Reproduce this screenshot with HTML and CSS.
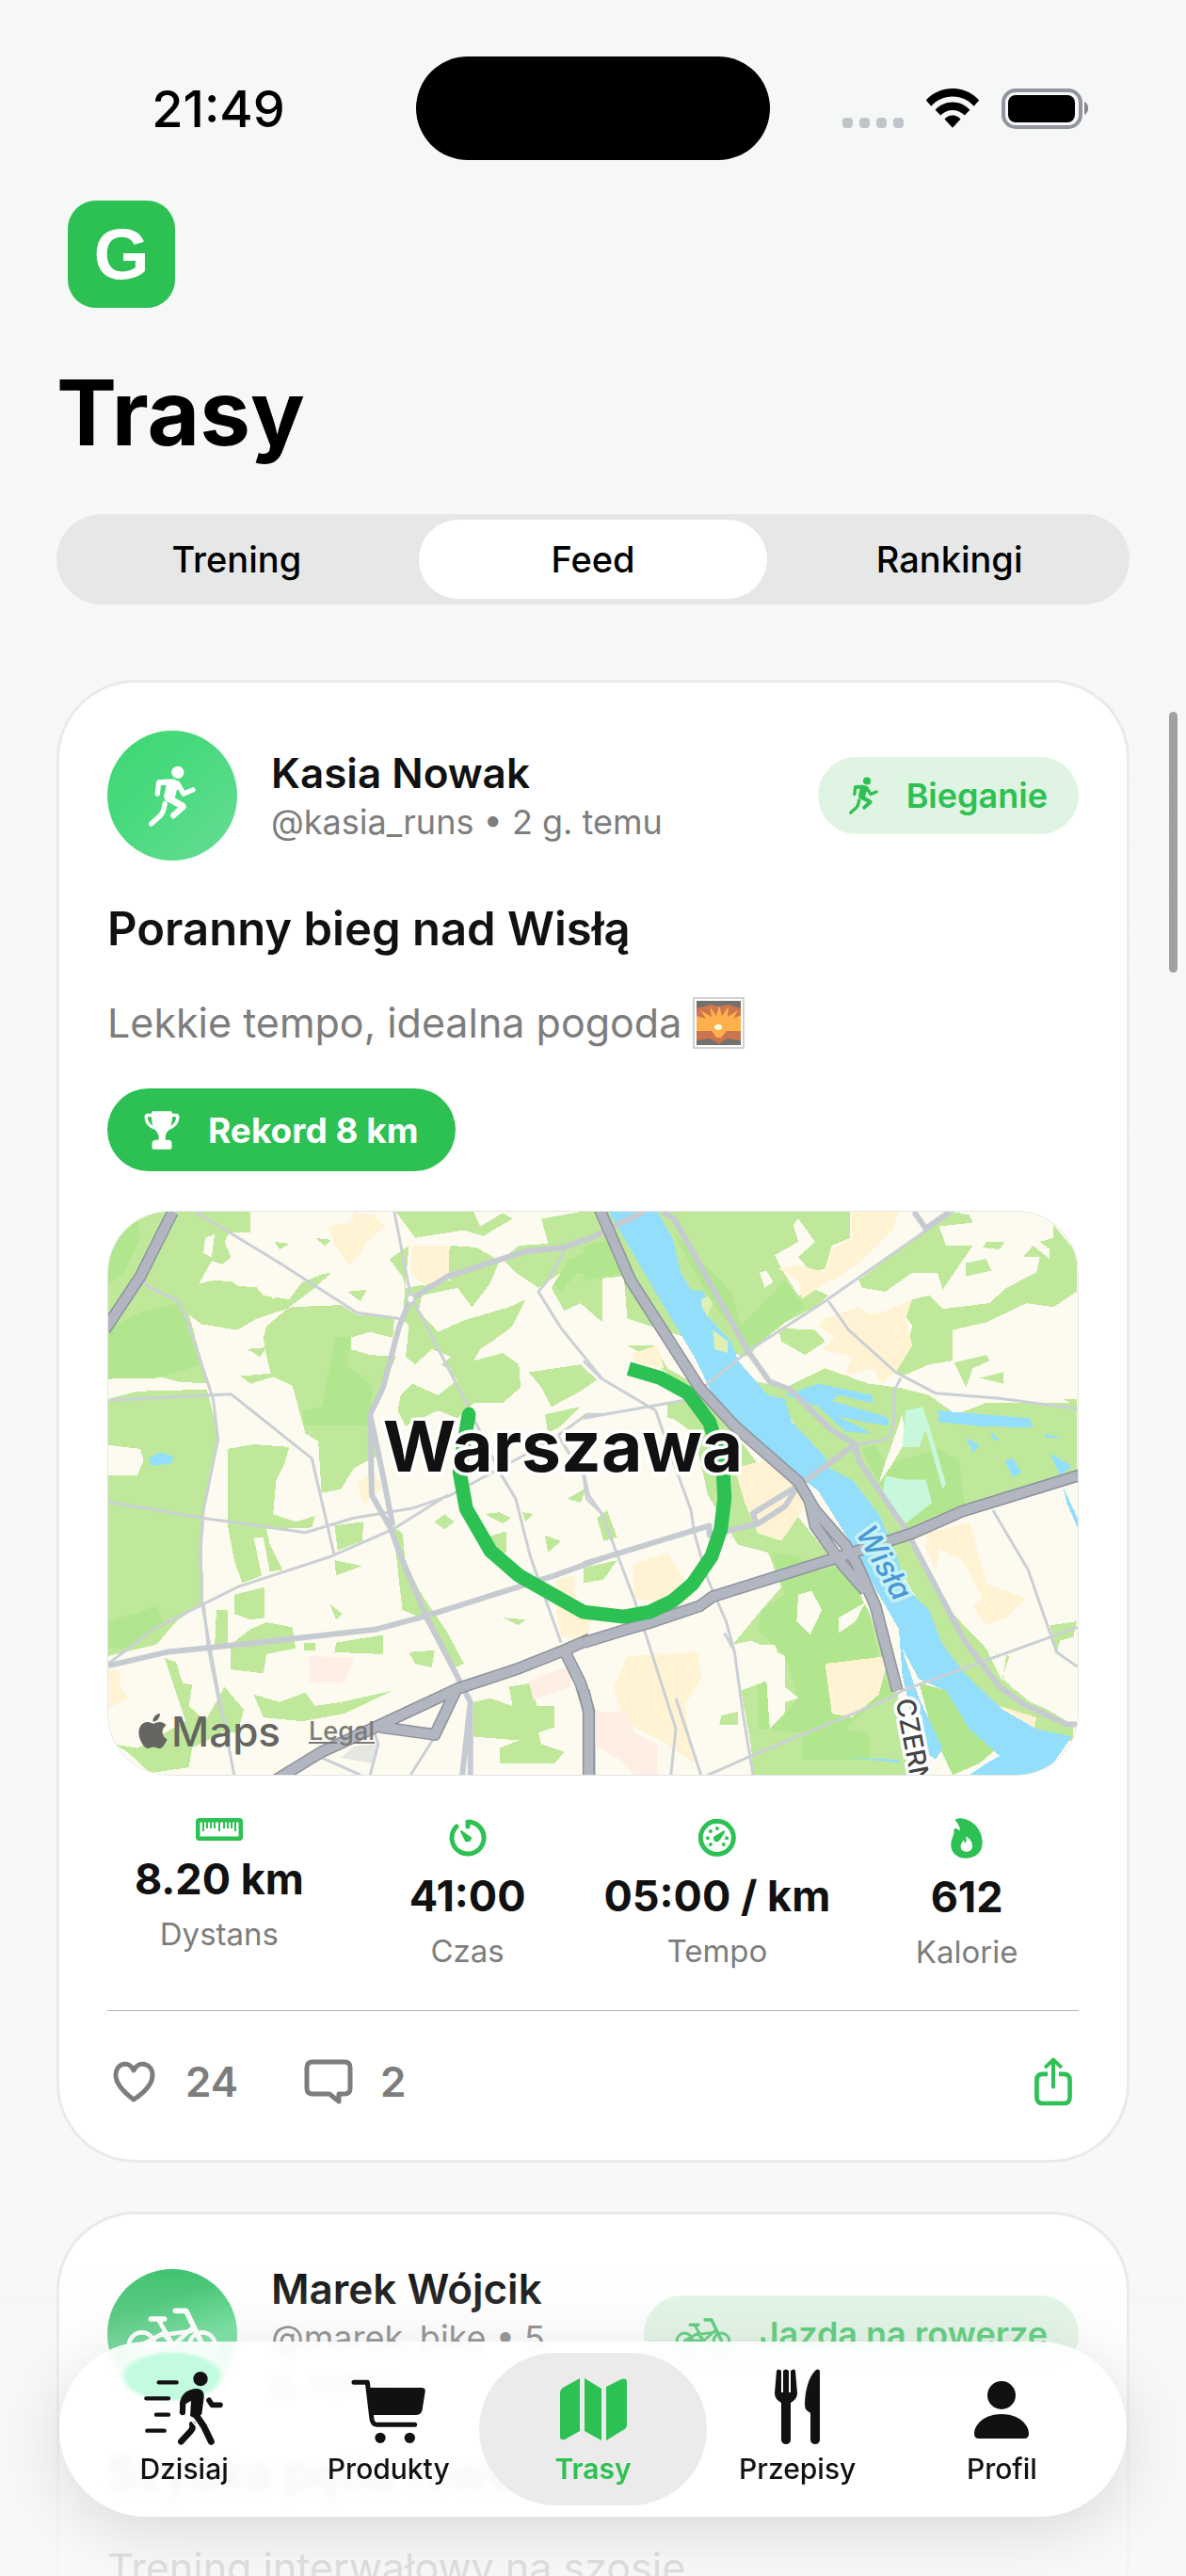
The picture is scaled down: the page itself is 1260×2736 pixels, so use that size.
FILE: index.html
```html
<!DOCTYPE html>
<html lang="pl">
  <head>
    <meta charset="UTF-8" />
    <meta name="viewport" content="width=device-width, initial-scale=1.0" />
    <title>Trasy</title>
    <link rel="stylesheet" href="styles.css">
  </head>
  <body>
    <!-- Shared icons -->
    <svg class="sprite" aria-hidden="true">
      <symbol id="icon-run" viewBox="172 160 151 196">
        <circle cx="265" cy="182" r="20" fill="currentColor" />
        <path d="M200 207Q224 202 250 204Q262 206 268 215L276 232L262 238L256 264L286 281Q296 290 288 300L262 322L240 318L266 294L228 274Q217 264 223 248L229 221L211 220L196 222Z" fill="currentColor" />
        <path d="M200 251L204 215H236M264 217L284 251L314 238M283 293L251 322M224 282Q220 308 211 319L180 347" fill="none" stroke="currentColor" stroke-width="16" stroke-linecap="round" stroke-linejoin="round" />
      </symbol>
      <symbol id="icon-bike" viewBox="100 150 294 168">
        <g fill="none" stroke="currentColor" stroke-width="14" stroke-linecap="round" stroke-linejoin="round">
          <circle cx="150" cy="270" r="41" />
          <circle cx="343" cy="270" r="41" />
          <path d="M150 268L218 232L250 270L307 218M214 237L307 225M150 268H250M204 190L250 270" />
          <path d="M179 186H222M257 160H291L343 268" stroke-width="17" />
        </g>
      </symbol>
    </svg>

    <!-- Status bar -->
    <div class="status-bar">
      <span class="status-time">21:49</span>
      <div class="island"></div>
      <div class="status-icons">
        <svg width="65" height="42" viewBox="0 0 65 42" fill="#c0c5ca">
          <rect x="0" y="31" width="11" height="11" rx="4" />
          <rect x="18" y="31" width="11" height="11" rx="4" />
          <rect x="36" y="31" width="11" height="11" rx="4" />
          <rect x="54" y="31" width="11" height="11" rx="4" />
        </svg>
        <svg width="58" height="42" viewBox="338 98 174 128">
          <path d="M425 98C458 98 489 111 511 136L494 155C476 135 452 124 425 124C398 124 374 135 356 155L339 136C361 111 392 98 425 98Z" />
          <path d="M425 142C447 142 466 151 481 167L464 185C453 174 440 168 425 168C410 168 397 174 386 185L369 167C384 151 403 142 425 142Z" />
          <path d="M425 185C435 185 444 189 451 197L425 225L399 197C406 189 415 185 425 185Z" />
        </svg>
        <svg width="94" height="43" viewBox="0 0 94 43">
          <rect x="2" y="2" width="82" height="39" rx="13" fill="none" stroke="#93959e" stroke-width="4" />
          <rect x="7" y="7" width="71" height="29" rx="8" />
          <path d="M88 14a8 8 0 0 1 0 14z" fill="#85888a" />
        </svg>
      </div>
    </div>

    <main class="screen">
      <div class="logo">G</div>
      <h1>Trasy</h1>

      <div class="segmented">
        <button>Trening</button>
        <button class="selected">Feed</button>
        <button>Rankingi</button>
      </div>

      <!-- Post: Kasia -->
      <article class="card">
        <header class="post-header">
          <div class="avatar"><svg width="50" height="65"><use href="#icon-run" /></svg></div>
          <div class="author">
            <h2>Kasia Nowak</h2>
            <p>@kasia_runs • 2 g. temu</p>
          </div>
          <span class="badge"><svg width="31" height="40"><use href="#icon-run" /></svg>Bieganie</span>
        </header>

        <h3>Poranny bieg nad Wisłą</h3>
        <p class="description">
          Lekkie tempo, idealna pogoda
          <svg class="sunrise" width="55" height="55" viewBox="0 0 55 55">
            <rect x="1" y="1" width="53" height="53" fill="#fff" stroke="#cfd1d4" stroke-width="2" />
            <rect x="4" y="4" width="47" height="47" fill="#72716e" />
            <path d="M4 12L20 8L28 10L38 8L51 12V36H4Z" fill="#cf7650" />
            <path d="M4 36V20L14 23L8 14L20 21L18 10L25 20L28 9L31 20L38 10L37 21L48 14L43 23L51 19V36Z" fill="#fdb04b" />
            <path d="M4 36H51V46L36 44L28 50L18 44L4 46Z" fill="#cc744e" />
            <path d="M20 36H36L30 43H25Z" fill="#fdb04b" />
            <ellipse cx="27" cy="32" rx="4" ry="3" fill="#f1ffe0" />
          </svg>
        </p>

        <div class="record">
          <svg width="38" height="41" viewBox="161 1262 113 123">
            <path d="M188 1263H246Q251 1263 250 1270H262Q274 1270 273 1284Q270 1313 240 1322Q230 1333 229 1340V1354H240Q250 1356 249 1366V1379Q249 1384 243 1384H192Q186 1384 186 1379V1366Q186 1356 196 1354H207V1340Q206 1333 196 1322Q165 1313 162 1284Q161 1270 173 1270H185Q184 1263 188 1263ZM172 1283Q174 1300 189 1309Q184 1295 184 1281H174ZM261 1281H251Q251 1295 246 1309Q261 1300 263 1283Z" fill="#fff" />
          </svg>
          Rekord 8 km
        </div>

        <div class="map">
          <svg class="map-canvas" viewBox="0 0 1032 599" preserveAspectRatio="xMidYMid slice">
            <rect width="1032" height="599" fill="#fdfaf0" />

            <!-- West of the river -->
            <g transform="translate(-14 -17) scale(.3444 .4082)">
              <g fill="#bfe89b" shape-rendering="crispEdges">
                <path d="M41 42H480V95L415 95L400 120L420 160L330 225L410 215L440 235L520 240L550 270L600 240L700 205L730 200L680 240L600 290L530 340L520 370L530 420L545 470L610 495L650 620L690 640L700 775L760 765L800 710L870 680L850 600L850 560L900 480L930 420L850 415L790 400L790 370L850 355L920 370L925 320L810 310L760 285L610 290L500 320L440 350L330 335L290 310L310 370L350 490L260 485L190 470L41 478Z" />
                <path d="M41 530L130 510L345 505L375 600L375 660L330 850L335 1060L250 1110L190 1170L41 1200V730L130 730L150 690L140 660L41 650Z" />
                <path d="M410 660L490 648L600 655L585 700L560 740L550 830L620 850L680 835L670 865L530 870L540 910L580 975L540 980L520 890L490 890L515 990L455 1010L430 950L410 860Z" />
                <path d="M430 1040L525 1020V1100L480 1105L430 1090ZM375 1080H410V1170H370ZM420 1170L480 1130L530 1112L610 1125L620 1180L530 1195L520 1245L420 1235ZM215 1205L250 1215L270 1270L300 1275L290 1330L340 1370L400 1280L460 1340L440 1400H390L300 1440L290 1490L170 1505L100 1450L60 1430L130 1440L280 1370Z" />
                <path d="M490 1300L570 1320L650 1295L680 1330L760 1320L920 1290L770 1350L640 1370L520 1360ZM740 860L830 850L825 900L750 925ZM740 950L825 965L745 990ZM745 1165L890 1145V1195L740 1190ZM645 1165H680V1185H645Z" />
                <path d="M930 42H1100L1170 42L1190 80L1260 45L1290 60L1200 105L1140 90L1060 100L990 110ZM1380 60L1500 42H1568V330L1500 280L1450 300L1410 240L1440 200L1370 240L1300 200L1260 165L1310 130L1400 125Z" />
                <path d="M970 130L910 165L950 210L960 240L1100 220L1070 190L1100 130L1180 135L1250 170L1220 230L1165 290L1120 240L1010 260L1000 300L1060 355L1140 325L1280 290L1330 270L1290 340L1260 360L1190 400L1170 430L1260 410L1310 440L1315 500L1260 540L1170 540L1120 580L1060 560L960 600L935 560L945 520L980 490L1060 520L1120 480L1070 440L1100 420L1040 400L990 440L960 420L970 340L950 320Z" />
                <path d="M1340 460L1500 440L1550 480L1500 510L1410 550L1380 500ZM1390 570L1500 550L1440 600L1400 620ZM1460 790L1520 760L1500 800ZM1050 850L1080 830L1110 850L1080 870ZM1205 830L1250 825L1285 840L1260 855ZM1210 890L1270 875V930L1210 940ZM1320 825L1355 830L1330 850ZM1390 885L1440 900L1400 930ZM920 860L950 880L960 960L1010 1040L1090 1140L1140 1220L1110 1230L1040 1110L950 1080ZM725 1065L765 1090L745 1105ZM970 1190L1050 1185L1040 1230L990 1220ZM1260 1100L1330 1105L1310 1120ZM1170 1320L1220 1310L1290 1330L1280 1280L1350 1270L1365 1330H1420V1385L1370 1400L1380 1430L1450 1450L1420 1480H1250V1440L1310 1420L1170 1410ZM555 120L600 125L570 140ZM680 110L730 115L710 130ZM780 250L840 245L820 275ZM450 470L520 465L600 460L480 490ZM470 400L530 395L510 420Z" />
              </g>
              <g fill="#b2e68e" shape-rendering="crispEdges">
                <path d="M41 42H130L140 110L90 200L41 230ZM41 345L150 300L260 280L330 440L190 475H41ZM740 370L790 365L780 440L860 500L840 600L650 600L640 560L700 550L730 430ZM41 1110L190 1070L220 1120L100 1180H41ZM1460 170L1568 120V220L1490 200L1440 250L1420 230Z" />
              </g>
              <g fill="#fdfaf0" shape-rendering="crispEdges">
                <path d="M320 230L360 170L440 190L430 225L370 220ZM340 110L370 100L360 160L335 150ZM480 220L550 190L640 225L600 270L520 260ZM1015 430L1100 450L1060 520L1015 500ZM590 690L620 660L660 700L650 740L600 735Z" />
              </g>
              <g fill="#fff3d3" shape-rendering="crispEdges">
                <path d="M720 80L790 70L800 42L860 50L895 80L840 120L820 150L785 180L740 130ZM980 130H1095V200L1020 235L975 200ZM810 750L860 720L890 760L830 805ZM41 1235L80 1240L75 1280L105 1310L45 1335ZM1425 1000L1480 990L1485 1060L1530 1100L1520 1160L1440 1150L1425 1080Z" />
              </g>
              <path d="M660 1200L800 1205L770 1270L665 1270ZM1340 1265L1470 1225V1280L1355 1315Z" fill="#ffeee4" />
              <path d="M165 685L200 668L243 680L235 698L175 705Z" fill="#93dffb" />
              <path d="M760 1465L800 1435L870 1430L860 1480Z" fill="#e4e6e0" />

              <g class="road minor">
                <path d="M310 42L560 170L810 305L940 320M145 220L170 240L260 275L290 340L365 530L380 635L335 820L325 940L330 1060L375 1270L430 1510M41 533L420 517L670 685L740 940M41 798L330 840L650 878L800 840L980 815L1100 780L1340 670L1400 640M41 1220L180 1130L440 1020L730 940L920 870L1090 780" />
                <path d="M925 42L975 260L1150 545L1250 720L1300 790L1345 940L1440 1165M1450 145L1400 220L1370 250L1440 345L1568 478M1430 625L1520 570H1568M1430 625L1510 730L1520 790L1568 830M335 1060L350 1180L390 1350M700 1465L820 1510M850 1510L875 1430L860 1390M1050 1410L1020 1450L975 1510" />
              </g>
              <g class="road street">
                <path d="M975 270L940 340L890 500L850 570L855 780L915 870L940 930L1025 1100L1130 1270L1160 1320V1510M850 570L890 730L920 860M975 270L1090 210L1330 145L1450 135L1568 95M41 1225L220 1190L500 1165L870 1130L1025 1095L1420 990L1568 945M1160 1320L1135 1510" />
              </g>
              <circle cx="975" cy="269" r="15" fill="#cbd0d5" />
              <circle cx="975" cy="269" r="8" fill="#fdfaf0" />
              <g class="road highway-edge">
                <path d="M240 42L140 210L30 350M545 1530L700 1450L880 1380L1120 1285L1300 1235L1450 1185L1530 1155M880 1385L1050 1405L1115 1290M1450 1185L1500 1270L1527 1345V1520" />
              </g>
              <g class="road highway">
                <path d="M240 42L140 210L30 350M545 1530L700 1450L880 1380L1120 1285L1300 1235L1450 1185L1530 1155M880 1385L1050 1405L1115 1290M1450 1185L1500 1270L1527 1345V1520" />
              </g>
            </g>

            <!-- East bank and the river -->
            <g transform="translate(506 -17) scale(.3571 .4082)">
              <g fill="#bfe89b" shape-rendering="crispEdges">
                <path d="M0 60L40 42H795V110L740 130L720 190L680 200L640 160L690 120L640 60L625 75L640 120L570 155L590 190L640 260L680 240L730 260L690 290L600 330L540 370L500 410L480 420L130 320L120 210L0 220Z" />
                <path d="M130 390L210 390L250 450L350 500L520 700L660 860L770 980L850 1080L880 1160L930 1270L980 1510H505L500 1440L470 1290L520 1260L545 1265L555 1390L600 1370L600 1320L640 1310L600 1280L600 1200L500 1160L445 1170L520 1090L590 1020L550 930L460 910L370 780L330 620L250 570L330 520L260 470L190 420Z" />
                <path d="M440 470L600 500L720 450L850 490L940 500L1030 520L1110 570L1200 540L1470 540V730L1150 830L960 880L1000 950L1090 1080L1200 1180L1250 1270L1460 1380V1420H1300L1200 1330L1100 1220L960 1000L820 830L700 690L600 560Z" />
                <path d="M1100 42L1150 50L1160 70L1060 80L1080 130L1160 130L1070 245L1055 200L980 200L900 250L830 240L820 220L1020 90ZM1200 120H1255L1240 140L1190 135ZM1140 175L1200 165L1215 195L1140 210ZM1400 75L1470 150V250L1400 290L1320 280L1200 330L1100 350L1100 430L1030 440L950 470L900 440L960 400L980 340L950 300L980 270L1030 260L1070 295L1210 280L1260 240L1350 200L1360 160L1310 160L1340 130L1390 165V140L1360 120L1400 110Z" />
                <path d="M580 345L690 350L720 380L660 415L590 380ZM1105 435L1200 415L1210 430L1160 450L1140 500ZM1180 475L1250 460V490ZM1260 1200L1180 1180L1270 1200L1250 1250L1330 1350L1240 1300ZM0 970L100 950L60 1000L0 1010ZM40 840L70 820L100 890L60 900ZM410 1355L460 1345V1380H405ZM1390 1120L1470 1110L1460 1150L1420 1160L1410 1190ZM1430 530H1470V550ZM0 450L30 470L0 500ZM250 540L340 530L340 585L250 580Z" />
              </g>
              <g fill="#b2e68e" shape-rendering="crispEdges">
                <path d="M270 100L440 250L470 340L600 220L660 290L500 400L400 300L330 200ZM830 660L870 650L900 700L1060 660L1120 690L1140 830L1050 830L960 870L850 700ZM560 930L640 940L700 980L780 960L830 1050L860 1120L890 1250L930 1300L870 1320L830 1350L780 1390L850 1400V1470H650V1400L520 1390V1270L545 1265L555 1390L640 1310L600 1200L520 1130L530 1080L600 1040ZM1000 1270L1130 1300L1260 1420L1180 1480L1100 1510L1040 1400ZM0 130L100 110L130 200L0 220Z" />
              </g>
              <g fill="#fdfaf0" shape-rendering="crispEdges">
                <path d="M640 1040L680 1030L710 1080L675 1145L635 1110ZM760 1100L840 1060L810 1110L760 1140ZM525 200L545 195L565 225L540 240ZM890 720L950 570L960 640L920 700L880 750ZM480 1170H570L600 1240L545 1265L470 1290ZM1260 1220L1420 1190L1470 1230V1370L1330 1320L1250 1260Z" />
              </g>
              <g fill="#fff3d3" shape-rendering="crispEdges">
                <path d="M800 42H940L920 90L840 160L780 200L700 240L650 270L640 220L580 190L640 180L720 200L740 140L800 110ZM720 320L820 290L850 310L900 300L980 270L960 320L980 390L930 460L890 490L860 450L780 470L800 420L710 400L750 370L700 340ZM860 350L920 380V440L850 390Z" />
                <path d="M450 710L540 690L640 750L660 810L590 900L520 880L480 800ZM1020 880L1150 850L1200 1010L1320 1050L1260 1100L1200 1120L1160 1070L1190 1050L1130 950L1060 920L1050 980L1020 920ZM720 1220L910 1200L880 1300L800 1360L740 1350ZM130 1200L340 1190L350 1260L300 1330L330 1480L230 1420L120 1370L90 1280ZM150 410L220 390L240 450L150 430ZM1240 1330L1350 1360L1340 1400L1260 1370ZM150 960L250 930L300 1000L240 1060L150 1050Z" />
              </g>
              <path d="M35 1345H130L150 1400L220 1430V1510H150L110 1470L35 1435Z" fill="#ffeee4" />
              <g fill="#93dffb" shape-rendering="crispEdges">
                <path d="M75 42H220L265 110L290 200L320 245L360 250L365 310L440 380L460 430L550 520L600 530L620 590L720 680L730 710L800 740L880 830L930 930L960 1020L1030 1080L1070 1170L1140 1250L1250 1340L1350 1390L1455 1410L1400 1480L1340 1510H1150L1200 1480L1240 1460L1150 1390L1080 1290L1000 1260L950 1180L960 1210L1000 1310L1070 1440L1050 1470L1000 1440L950 1250L940 1130L880 1040L800 910L700 770L640 730L460 600L380 510L330 420L200 230Z" />
                <path d="M600 520L700 490L860 520V540L760 520L740 535L840 560L910 580V600L840 590L760 575L860 620L780 615L700 550ZM1055 560L1330 580L1340 605L1170 600L1060 590ZM1140 630L1180 650L1160 670ZM1255 690L1280 685L1305 720L1280 735ZM1210 610L1240 640L1220 635ZM1375 620L1425 630L1380 632ZM1390 670L1455 705L1420 730ZM1430 760L1472 840V865L1440 800ZM785 1465L940 1470V1478Z" />
              </g>
              <path d="M350 270L370 262L385 280L370 312L352 290ZM385 350L430 380V410L390 400Z" fill="#dff0b4" />
              <path d="M960 560L1010 550L1030 600L1080 750L1070 765L1020 610L1000 655H950ZM900 730L960 740L1020 740L1038 800L960 855L890 780Z" fill="#c8f8dc" />

              <g class="road minor">
                <path d="M0 430L50 475L215 560L270 700L320 820L330 880L370 1000L425 1110L450 1190L475 1350L505 1510M0 580L320 530L370 490L490 405L720 275L1100 42M730 275L790 350L930 460L1050 515L1240 528L1472 555M945 475L925 510V590Q920 635 880 640L810 648M1220 820L1325 975L1410 1190L1472 1228M370 1510L500 1460L915 1310L950 1290L1472 1125M0 720L15 780L55 830L150 1050L195 1170L275 1390L260 1510M275 1310L350 1510M420 1140L445 1180" />
              </g>
              <g class="road street">
                <path d="M0 120L90 80L180 42M235 42L270 60L490 405L555 485L615 505L740 612L810 648L820 690L960 870L1135 1160L1240 1280L1310 1325L1440 1378H1472M810 648L650 750L505 828L515 855M640 755L600 810L520 855L375 885V860L0 960M985 42L1020 85L1090 42" />
              </g>
              <g class="road highway-edge">
                <path d="M0 1165L130 1130L190 1115L345 1070L385 1045L750 945L980 880L1130 822L1480 728M45 30L140 220L345 500L450 600L640 745L690 820L780 910L815 960L870 1070L935 1290M675 800L690 860L770 960L840 1030M0 1290L15 1345V1520" />
              </g>
              <g class="road highway">
                <path d="M0 1165L130 1130L190 1115L345 1070L385 1045L750 945L980 880L1130 822L1480 728M45 30L140 220L345 500L450 600L640 745L690 820L780 910L815 960L870 1070L935 1290M675 800L690 860L770 960L840 1030M0 1290L15 1345V1520" />
              </g>
            </g>

            <!-- Run track -->
            <path d="M554 167L588 177L617 193L640 224L654 269L656 305L652 338L642 367L622 396L601 414L576 426L549 431L506 426L437 387L407 361L381 316L374 277L379 244L384 215" fill="none" stroke="#2dc052" stroke-width="15" stroke-linejoin="round" />
            <circle cx="384" cy="215" r="7" fill="#2dc052" />

            <text class="city" x="484" y="277">Warszawa</text>
            <text class="river" transform="translate(795 342) rotate(60)">Wisła</text>
            <text class="street-name" transform="translate(838 520) rotate(79)">CZERN</text>
          </svg>
          <div class="map-credit">
            <svg width="31" height="37" viewBox="2 0 20 24"><path d="M12.152 6.896c-.948 0-2.415-1.078-3.96-1.04-2.04.027-3.91 1.183-4.961 3.014-2.117 3.675-.546 9.103 1.519 12.09 1.013 1.454 2.208 3.09 3.792 3.039 1.52-.065 2.09-.987 3.935-.987 1.831 0 2.35.987 3.96.948 1.637-.026 2.676-1.48 3.676-2.948 1.156-1.688 1.636-3.325 1.662-3.415-.039-.013-3.182-1.221-3.22-4.857-.026-3.04 2.48-4.494 2.597-4.559-1.429-2.09-3.623-2.324-4.39-2.376-2-.156-3.675 1.09-4.61 1.09zM15.53 3.83c.843-1.012 1.4-2.427 1.245-3.83-1.207.052-2.662.805-3.532 1.818-.78.896-1.454 2.338-1.273 3.714 1.338.104 2.715-.688 3.559-1.701" fill="#656561" /></svg>
            <span>Maps</span>
            <a href="#legal">Legal</a>
          </div>
        </div>

        <div class="stats">
          <div class="stat">
            <svg width="50" height="24" viewBox="0 0 50 24" fill="none" stroke="#2dc052">
              <rect x="2" y="2" width="46" height="20" rx="3" stroke-width="5" />
              <path d="M8 4V14M12 4V11M16 4V11M20 4V11M25 4V14M30 4V11M34 4V11M38 4V11M42 4V14" stroke-width="2" />
            </svg>
            <strong>8.20 km</strong>
            <span>Dystans</span>
          </div>
          <div class="stat">
            <svg width="40" height="42" viewBox="0 0 40 40" fill="none" stroke="#2dc052" stroke-width="5" stroke-linecap="round" stroke-linejoin="round">
              <path d="M20 8V3A17 17 0 1 1 8 8" />
              <path d="M13 13L23 20Q23 24 18 23Z" fill="#2dc052" stroke-width="2" />
            </svg>
            <strong>41:00</strong>
            <span>Czas</span>
          </div>
          <div class="stat">
            <svg width="40" height="42" viewBox="366 98 121 121" fill="#2dc052">
              <circle cx="426" cy="158" r="53" fill="none" stroke="#2dc052" stroke-width="15" />
              <circle cx="426" cy="128" r="6" />
              <circle cx="405" cy="137" r="6" />
              <circle cx="396" cy="159" r="6" />
              <circle cx="405" cy="180" r="6" />
              <circle cx="447" cy="180" r="6" />
              <circle cx="457" cy="159" r="6" />
              <path d="M447 135Q452 135 451 140L436 164Q431 172 422 171Q413 168 414 159Q415 155 420 152Z" />
            </svg>
            <strong>05:00 / km</strong>
            <span>Tempo</span>
          </div>
          <div class="stat">
            <svg width="34" height="43" viewBox="1166 96 103 130">
              <path d="M1180 103Q1184 95 1200 97C1242 102 1268 138 1268 175C1268 206 1247 225 1216 225C1185 225 1167 206 1167 183C1167 160 1179 153 1176 133Q1180 124 1196 137Q1195 118 1180 103ZM1215 155Q1219 166 1213 177L1207 167C1203 174 1198 180 1198 188A19 17 0 0 0 1236 187C1236 174 1228 161 1215 155Z" fill="#2dc052" fill-rule="evenodd" />
            </svg>
            <strong>612</strong>
            <span>Kalorie</span>
          </div>
        </div>

        <footer class="actions">
          <button aria-label="Polub">
            <svg width="57" height="48" viewBox="0 0 57 48" fill="none" stroke="#7d7d7d" stroke-width="5" stroke-linejoin="round">
              <path d="M28 43C20 37 9 28 9 17C9 4 23 1 28 12C33 1 48 4 48 17C48 28 37 37 28 43Z" />
            </svg>
            24
          </button>
          <button aria-label="Komentarze">
            <svg width="57" height="48" viewBox="0 0 57 48" fill="none" stroke="#7d7d7d" stroke-width="5" stroke-linejoin="round">
              <path d="M11 3H45Q51 3 51 9V31Q51 37 45 37H39V45L29 37H11Q5 37 5 31V9Q5 3 11 3Z" />
            </svg>
            2
          </button>
          <button class="share" aria-label="Udostępnij">
            <svg width="42" height="52" viewBox="1434 865 126 157" fill="none" stroke="#2dc052" stroke-width="14" stroke-linejoin="round">
              <path d="M1479 919H1464Q1444 919 1444 939V993Q1444 1013 1464 1013H1530Q1550 1013 1550 993V939Q1550 919 1530 919H1515" />
              <path d="M1497 960V875M1474 895L1497 873L1520 895" stroke-width="12" stroke-linecap="round" />
            </svg>
          </button>
        </footer>
      </article>

      <!-- Post: Marek -->
      <article class="card">
        <header class="post-header">
          <div class="avatar bike"><svg width="98" height="56"><use href="#icon-bike" /></svg></div>
          <div class="author">
            <h2>Marek Wójcik</h2>
            <p>@marek_bike • 5 g.&nbsp;temu</p>
          </div>
          <span class="badge faded"><svg width="60" height="34"><use href="#icon-bike" /></svg>Jazda na rowerze</span>
        </header>
        <h3>Szybka pętla rowerowa</h3>
        <p class="description">Trening interwałowy na szosie</p>
      </article>
    </main>

    <div class="scroll-thumb"></div>
    <div class="bottom-fade"></div>

    <!-- Tab bar -->
    <nav class="tab-bar">
      <a href="#dzisiaj">
        <svg width="90" height="84" viewBox="153 348 270 252" fill="none" stroke="#111" stroke-linecap="round" stroke-linejoin="round">
          <path d="M206 391H263M166 442H237M198 494H237M169 545H224" stroke-width="13" />
          <circle cx="339" cy="380" r="23" fill="#111" stroke="none" />
          <path d="M327 411C342 411 352 422 350 440L343 492L326 508L306 498L309 450L292 460L291 488L272 488L275 450C278 428 300 412 327 411Z" fill="#111" stroke="none" />
          <path d="M282 487V456" stroke-width="18" />
          <path d="M366 448L376 463H402" stroke-width="17" />
          <path d="M324 494L349 530L373 580" stroke-width="21" />
          <path d="M313 525Q316 538 308 546L277 580" stroke-width="20" />
          <path d="M304 504L328 534" stroke="#fff" stroke-width="5" />
        </svg>
        Dzisiaj
      </a>
      <a href="#produkty">
        <svg width="80" height="84" viewBox="812 348 240 252" fill="none" stroke="#111" stroke-width="15" stroke-linecap="round" stroke-linejoin="round">
          <path d="M821 391H864L878 508Q881 526 896 526H1015" />
          <path d="M870 408H1038Q1050 409 1048 421L1039 478Q1036 495 1020 495H880Z" fill="#111" stroke="none" />
          <g fill="#111" stroke="none">
            <circle cx="905" cy="568" r="17" />
            <circle cx="999" cy="568" r="17" />
          </g>
        </svg>
        Produkty
      </a>
      <a href="#trasy" class="active">
        <svg width="72" height="84" viewBox="592 2516 72 84" fill="#2dc052">
          <path d="M593 2541Q593 2538 596 2536L614 2526V2582L598 2591Q593 2592 593 2588ZM619 2526L637 2537V2592L619 2582ZM642 2535L658 2527Q664 2525 664 2530V2575Q664 2579 660 2581L642 2592Z" />
        </svg>
        Trasy
      </a>
      <a href="#przepisy">
        <svg width="52" height="84" viewBox="819 2516 52 84" fill="#111">
          <path d="M823 2518Q825 2515 828 2518V2541H830V2518Q833 2515 836 2518V2541H838V2518Q842 2515 843 2518L845 2542Q845 2548 838 2552V2592Q837 2596 833 2596Q829 2596 828 2592V2552Q821 2548 821 2542Z" />
          <path d="M865 2517Q869 2515 869 2520V2592Q868 2596 864 2596Q860 2596 859 2592V2563L855 2560Q853 2558 853 2554C853 2540 857 2524 865 2517Z" />
        </svg>
        Przepisy
      </a>
      <a href="#profil">
        <svg width="60" height="84" viewBox="1035 2516 60 84" fill="#111">
          <circle cx="1065" cy="2544" r="15" />
          <path d="M1065 2564C1083 2564 1094 2575 1094 2585Q1094 2590 1089 2590H1041Q1036 2590 1036 2585C1036 2575 1047 2564 1065 2564Z" />
        </svg>
        Profil
      </a>
    </nav>
  </body>
</html>
```
FILE: styles.css
```css
* {
  box-sizing: border-box;
}

body {
  margin: 0;
  height: 100vh;
  overflow: hidden;
  background: linear-gradient(#f6f8f7, #f8f8f7);
  font-family: Inter, "Liberation Sans", sans-serif;
  color: #111;
}

h1,
h2,
h3,
p {
  margin: 0;
}

svg {
  flex: none;
}

button {
  padding: 0;
  border: none;
  background: none;
  font: inherit;
  color: inherit;
  cursor: pointer;
}

.sprite {
  position: absolute;
  width: 0;
  height: 0;
}

/* Status bar */
.status-bar {
  display: grid;
  grid-template-columns: 1fr 376px 1fr;
  align-items: center;
  justify-items: center;
  padding-top: 60px;
}

.status-time {
  padding-left: 22px;
  font-size: 54px;
  font-weight: 500;
  color: #000;
}

.island {
  width: 100%;
  height: 110px;
  border-radius: 55px;
  background: #000;
}

.status-icons {
  display: flex;
  align-items: center;
  gap: 23px;
  padding-right: 26px;
}

/* Screen */
.screen {
  padding: 43px 60px 0;
}

.logo {
  width: 114px;
  height: 114px;
  margin-left: 12px;
  border-radius: 30px;
  background: #2dc052;
  color: #fff;
  font-family: "Liberation Sans", sans-serif;
  font-size: 76px;
  font-weight: 700;
  line-height: 114px;
  text-align: center;
}

h1 {
  margin-top: 51px;
  font-size: 96px;
  line-height: 120px;
  color: #000;
}

.segmented {
  display: grid;
  grid-template-columns: repeat(3, 1fr);
  gap: 8px;
  height: 96px;
  margin: 48px 0 80px;
  padding: 6px;
  border-radius: 48px;
  background: #e6e8e7;
}

.segmented button {
  border-radius: 42px;
  font-size: 38px;
  font-weight: 500;
  color: #000;
}

.segmented .selected {
  background: #fff;
}

/* Cards */
.card {
  margin-bottom: 52px;
  padding: 51px;
  border: 3px solid #e9eaea;
  border-radius: 84px;
  background: #fff;
}

.post-header {
  display: flex;
  align-items: center;
  gap: 36px;
}

.avatar {
  display: flex;
  align-items: center;
  justify-content: center;
  flex: none;
  width: 138px;
  height: 138px;
  border-radius: 50%;
  background: linear-gradient(135deg, #3dd672, #48da7d 40%, #66dc94);
  color: #fff;
}

.avatar.bike {
  background: linear-gradient(160deg, #3fc36f 30%, #5fdc91 60%);
}

.author {
  flex: 1;
}

.author h2 {
  font-size: 44px;
  font-weight: 600;
  line-height: 56px;
}

.author p {
  font-size: 36px;
  line-height: 48px;
  color: #7d7d7d;
}

.badge {
  display: flex;
  align-items: center;
  gap: 30px;
  height: 82px;
  padding: 0 33px;
  border-radius: 41px;
  background: #dff4e3;
  color: #2dc052;
  font-size: 36px;
  font-weight: 600;
  white-space: nowrap;
}

.badge.faded {
  color: #3fc664;
}

h3 {
  margin-top: 43px;
  font-size: 49px;
  font-weight: 600;
  line-height: 60px;
}

.description {
  margin-top: 41px;
  font-size: 43px;
  line-height: 56px;
  color: #7d7d7d;
}

.sunrise {
  vertical-align: bottom;
}

.record {
  display: flex;
  align-items: center;
  gap: 30px;
  width: fit-content;
  height: 88px;
  margin-top: 42px;
  padding: 0 39px;
  border-radius: 44px;
  background: #2dc052;
  color: #fff;
  font-size: 37px;
  font-weight: 700;
}

/* Map */
.map {
  position: relative;
  margin-top: 42px;
  border: 1px solid #e4e5e4;
  border-radius: 66px;
  overflow: hidden;
}

.map-canvas {
  display: block;
  width: 100%;
}

.road {
  fill: none;
  stroke-linejoin: round;
}

.road path {
  vector-effect: non-scaling-stroke;
}

.minor {
  stroke: #cbd0d5;
  stroke-width: 3;
}

.street {
  stroke: #c6cbd1;
  stroke-width: 6;
}

.highway-edge {
  stroke: #8f939c;
  stroke-width: 13;
}

.highway {
  stroke: #b2b6c1;
  stroke-width: 10;
}

.city,
.river,
.street-name {
  stroke: #fff;
  stroke-width: 7;
  stroke-linejoin: round;
  paint-order: stroke;
}

.city {
  font-size: 75px;
  font-weight: 700;
  text-anchor: middle;
  fill: #111;
}

.river {
  font-size: 32px;
  font-style: italic;
  font-weight: 500;
  fill: #4a96d8;
  stroke: #c5f2f5;
}

.street-name {
  font-size: 28px;
  font-weight: 500;
  fill: #444;
}

.map-credit {
  position: absolute;
  left: 32px;
  bottom: 18px;
  display: flex;
  align-items: center;
  gap: 4px;
  color: #656561;
  font-size: 44px;
  font-weight: 500;
  line-height: 56px;
}

.map-credit a {
  margin-left: 26px;
  color: #7b7b78;
  font-size: 27px;
}

/* Stats */
.stats {
  display: grid;
  grid-template-columns: repeat(4, 1fr);
  gap: 26px;
  margin-top: 45px;
  padding-bottom: 42px;
  border-bottom: 1px solid #b4b7ba;
}

.stat {
  display: flex;
  flex-direction: column;
  align-items: center;
}

.stat strong {
  margin-top: 14px;
  font-size: 45px;
  font-weight: 700;
  line-height: 54px;
  white-space: nowrap;
}

.stat span {
  margin-top: 11px;
  font-size: 33px;
  line-height: 40px;
  color: #7d7d7d;
}

/* Actions */
.actions {
  display: flex;
  gap: 68px;
  height: 64px;
  margin-top: 43px;
}

.actions button {
  display: flex;
  align-items: center;
  gap: 26px;
  font-size: 44px;
  font-weight: 600;
  color: #7d7d7d;
}

.actions .share {
  margin-left: auto;
  padding-right: 6px;
}

/* Overlays */
.scroll-thumb {
  position: fixed;
  top: 756px;
  right: 9px;
  width: 9px;
  height: 277px;
  border-radius: 5px;
  background: #a0a1a1;
}

.bottom-fade {
  position: fixed;
  left: 0;
  right: 0;
  bottom: 0;
  height: 330px;
  background: linear-gradient(rgba(246, 247, 246, 0), rgba(246, 247, 246, 0.8) 80%);
}

.tab-bar {
  position: fixed;
  left: 63px;
  right: 63px;
  bottom: 63px;
  display: grid;
  grid-template-columns: repeat(5, 1fr);
  height: 186px;
  padding: 12px 24px;
  border-radius: 93px;
  background: radial-gradient(56px 27px at 120px 37px, #c2fbe0 85%, rgba(194, 251, 224, 0)), rgba(255, 255, 255, 0.88);
  backdrop-filter: blur(5px);
  box-shadow: 0 16px 64px rgba(0, 0, 0, 0.12);
}

.tab-bar a {
  display: flex;
  flex-direction: column;
  align-items: center;
  margin: 0 -12px;
  padding-top: 17px;
  border-radius: 81px;
  color: #111;
  font-size: 30px;
  font-weight: 500;
  line-height: 44px;
  text-decoration: none;
}

.tab-bar .active {
  background: #ebebeb;
  color: #2dc052;
  font-weight: 600;
}
```
